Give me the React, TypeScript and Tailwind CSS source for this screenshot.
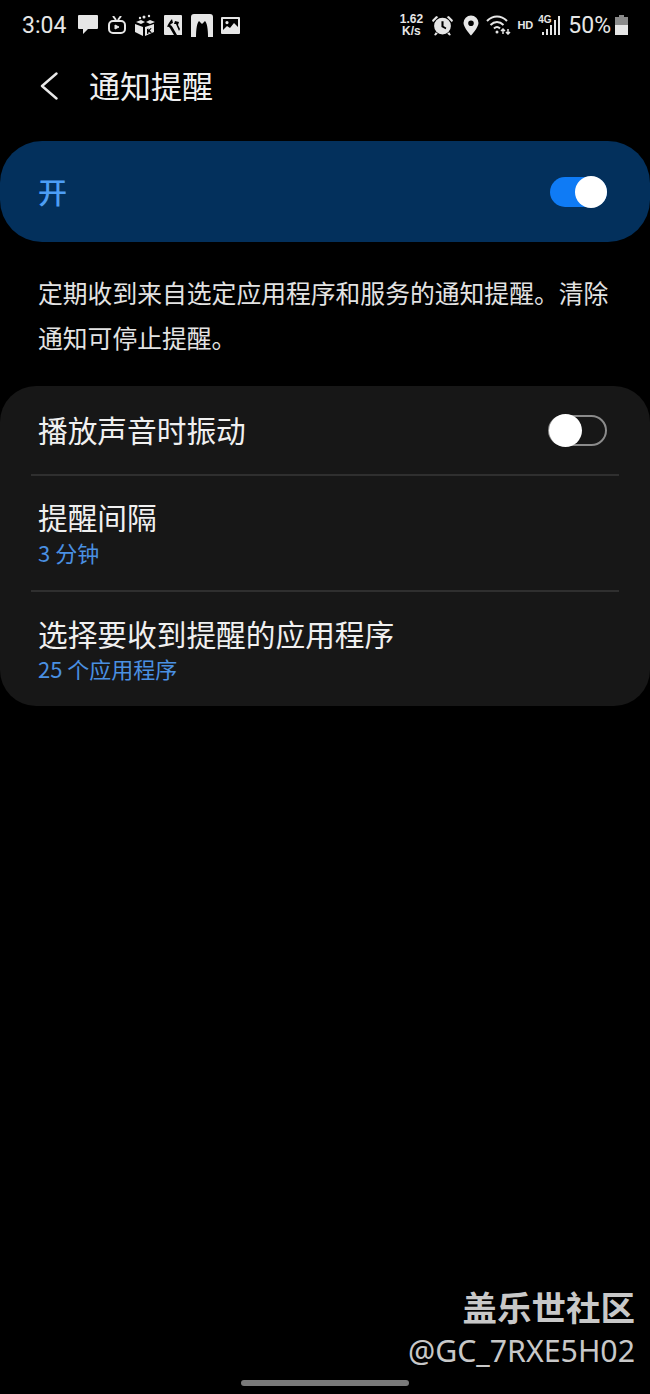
const cjk = "font-['Noto_Sans_CJK_SC','Noto_Sans',sans-serif]"

function LeftIcons() {
  return (
    <div className="flex items-center text-[#e6e6e6]">
      {/* message */}
      <svg width="20" height="20" viewBox="0 0 20 20" fill="currentColor">
        <path d="M1 0h18a1 1 0 0 1 1 1v12a1 1 0 0 1-1 1H10l-5 5v-5H1a1 1 0 0 1-1-1V1a1 1 0 0 1 1-1z" />
      </svg>
      {/* tv */}
      <svg width="18" height="18" viewBox="0 0 18 18" fill="none" stroke="currentColor" strokeWidth="2" className="ml-[10px]">
        <path d="M5 0l3 4M13 0l-3 4" />
        <rect x="1" y="5" width="16" height="12" rx="4" />
        <path d="M7 9l4 2-4 2z" fill="currentColor" strokeWidth="1" />
      </svg>
      {/* box */}
      <svg width="20" height="22" viewBox="0 0 20 22" fill="currentColor" className="ml-[9px]">
        <circle cx="9" cy="3" r="1.500" />
        <circle cx="14" cy="2" r="1.200" />
        <circle cx="5" cy="4" r="1.200" />
        <path d="M1 8l5-2 4 2-4 2zM11 8l4-2 5 2-5 2z" />
        <path fillRule="evenodd" d="M0 10l8 3v9l-8-4zM10 13l9-3v8l-9 4zM12 15v5l1.500-.5v-1.500l2.500 1 .8-.5-2-2 1.800-2-.8-.5-2.300 2v-1.500z" />
      </svg>
      {/* note */}
      <svg width="18" height="20" viewBox="0 0 18 20" fill="currentColor" className="ml-[9px]">
        <path fillRule="evenodd" d="M1 0h16a1 1 0 0 1 1 1v19H1a1 1 0 0 1-1-1V1a1 1 0 0 1 1-1zM8 4C6 6 4 9 3 12c2-1 3 1 4 3l3 5h3L9 13c-1-2-2-3-3-3 1-1 2-2 3-2zM11 6l-1 3 2 0 3 7 1-2-2-4 1-3z" />
      </svg>
      {/* arch */}
      <svg width="22" height="23" viewBox="0 0 22 23" fill="currentColor" className="ml-[9px]">
        <path d="M3 0h16a3 3 0 0 1 3 3v20h-5c0-8-1-14-3-16l-3 3-3-3c-2 2-3 8-3 16H0V3a3 3 0 0 1 3-3z" />
      </svg>
      {/* image */}
      <svg width="19" height="17" viewBox="0 0 19 17" fill="currentColor" className="ml-[8px]">
        <path fillRule="evenodd" d="M1 0h17a1 1 0 0 1 1 1v15a1 1 0 0 1-1 1H1a1 1 0 0 1-1-1V1a1 1 0 0 1 1-1zM2 2v11l4-4 3 2 4-5 4 4V2zM6 4a1.600 1.600 0 1 0 0 3.200A1.600 1.600 0 0 0 6 4z" />
      </svg>
    </div>
  )
}

function RightIcons() {
  return (
    <div className="flex items-center text-[#e6e6e6]">
      <div className="flex flex-col items-center w-[26px] text-[12px] leading-[12px] font-bold font-['Liberation_Sans',sans-serif]">
        <span>1.62</span>
        <span>K/s</span>
      </div>
      {/* alarm */}
      <svg width="21" height="21" viewBox="0 0 20 20" fill="currentColor" className="ml-[8px]">
        <path d="M0 5l4-4 2 1-5 5zM20 5l-4-4-2 1 5 5z" />
        <path d="M3.500 16.500L2 19l1.500.5 2-2zM16.500 16.500L18 19l-1.500.5-2-2z" />
        <path fillRule="evenodd" d="M10 2.500a8 8 0 1 1 0 16 8 8 0 0 1 0-16zM9 6v5.500l4 2 .7-1.300L11 10.500V6z" />
      </svg>
      {/* location */}
      <svg width="16" height="21" viewBox="0 0 16 20" fill="currentColor" className="ml-[10px]">
        <path fillRule="evenodd" d="M8 0a7.500 7.500 0 0 1 7.500 7.500C15.500 12 8 20 8 20S.5 12 .5 7.500A7.500 7.500 0 0 1 8 0zm0 5a2.800 2.800 0 1 0 0 5.600A2.800 2.800 0 0 0 8 5z" />
      </svg>
      {/* wifi */}
      <svg width="26" height="20" viewBox="0 0 26 20" fill="none" stroke="currentColor" strokeWidth="2" className="ml-[7px]">
        <path d="M1 6c6-6 14-6 20 0M4.500 10c4-4 9-4 13 0M8 13.500c2-2 4-2 6 0" />
        <circle cx="11" cy="17" r="1.500" fill="currentColor" stroke="none" />
        <path d="M17 19v-5M15 16l2-2 2 2M22 14v5M20 17l2 2 2-2" strokeWidth="1.500" />
      </svg>
      <span className="ml-[5px] text-[11px] leading-none font-bold font-['Liberation_Sans',sans-serif]">HD</span>
      <div className="ml-[5px] relative w-[22px] h-[20px]">
        <span className="absolute left-0 top-0 text-[10px] leading-[10px] font-bold font-['Liberation_Sans',sans-serif]">4G</span>
        <svg width="22" height="20" viewBox="0 0 22 20" fill="currentColor" className="absolute left-0 top-0">
          <rect x="4" y="17" width="2" height="3" />
          <rect x="8" y="14" width="2" height="6" />
          <rect x="12" y="10" width="2" height="10" />
          <rect x="16" y="5" width="2" height="15" />
          <rect x="20" y="1" width="2" height="19" />
        </svg>
      </div>
      <span className="ml-[8px] text-[23px] leading-none font-['Roboto',sans-serif]">50%</span>
      {/* battery */}
      <svg width="13" height="20" viewBox="0 0 13 20" className="ml-[4px]">
        <path d="M4 0h5v2h4v8H0V2h4z" fill="#8a8a8a" />
        <rect x="0" y="10" width="13" height="10" fill="#e6e6e6" />
      </svg>
    </div>
  )
}

function Toggle({ on }: { on: boolean }) {
  if (on) {
    return (
      <div className="w-[57px] h-[30px] relative rounded-full bg-[#0f7bf5]">
        <div className="absolute right-0 top-[-1px] w-[32px] h-[32px] rounded-full bg-white" />
      </div>
    )
  }
  return (
    <div className="w-[59px] h-[31px] relative rounded-full border-2 border-[#8b8b8b]">
      <div className="absolute left-[-1px] top-[-3px] w-[33px] h-[33px] rounded-full bg-white" />
    </div>
  )
}

export default function App() {
  return (
    <div className={`relative w-[650px] h-[1394px] bg-black overflow-hidden flex flex-col ${cjk}`}>
      <div className="h-[50px] pl-[22px] pr-[22px] flex items-center justify-between">
        <div className="flex items-center gap-[12px]">
          <span className="text-[23px] leading-none text-[#e6e6e6] font-['Roboto',sans-serif]">3:04</span>
          <LeftIcons />
        </div>
        <RightIcons />
      </div>

      <div className="h-[74px] pb-[6px] flex items-center pl-[40px]">
        <svg width="18" height="28" viewBox="0 0 18 28" fill="none" stroke="#e8e8e8" strokeWidth="2.400" strokeLinecap="round" strokeLinejoin="round" className="mt-[3px]">
          <path d="M16.500 1.500L2 14l14.500 12.500" />
        </svg>
        <span className="ml-[31px] text-[31px] leading-none text-[#f0f0f0]">通知提醒</span>
      </div>

      <div className="mt-[17px] h-[101px] rounded-[42px] bg-[#03305c] flex items-center justify-between pl-[38px] pr-[43px]">
        <span className="text-[29px] leading-none font-medium text-[#4d9ef5]">开</span>
        <Toggle on />
      </div>

      <p className="mt-[28px] px-[38px] text-[24.8px] leading-[45px] text-[#e3e3e3]">
        定期收到来自选定应用程序和服务的通知提醒。清除通知可停止提醒。
      </p>

      <div className="mt-[26px] rounded-[36px] bg-[#171717] flex flex-col">
        <div className="h-[88px] flex items-center justify-between pl-[38px] pr-[43px]">
          <span className="text-[29.7px] leading-none text-[#f0f0f0]">播放声音时振动</span>
          <Toggle on={false} />
        </div>
        <div className="mx-[31px] h-[2px] bg-[#2f2f2f]" />
        <div className="h-[114px] pb-[1px] flex flex-col justify-center px-[38px]">
          <span className="text-[29.7px] leading-[36px] mb-[2px] text-[#f0f0f0]">提醒间隔</span>
          <span className="text-[22px] leading-[30px] text-[#4a90e2]">3 分钟</span>
        </div>
        <div className="mx-[31px] h-[2px] bg-[#2f2f2f]" />
        <div className="h-[114px] flex flex-col justify-center px-[38px]">
          <span className="text-[29.7px] leading-[36px] mb-[1px] text-[#f0f0f0]">选择要收到提醒的应用程序</span>
          <span className="text-[22px] leading-[30px] text-[#4a90e2]">25 个应用程序</span>
        </div>
      </div>

      {/* watermark */}
      <div className="absolute right-[15px] top-[1283px] flex flex-col items-end text-[#c8c8c8]">
        <span className="text-[34.5px] leading-[46px] font-bold">盖乐世社区</span>
        <span className="text-[30.3px] leading-[44px] font-['Noto_Sans',sans-serif]">@GC_7RXE5H02</span>
      </div>

      {/* home bar */}
      <div className="absolute left-[241px] top-[1380px] w-[168px] h-[6px] rounded-full bg-[#7a7a7a]" />
    </div>
  )
}
